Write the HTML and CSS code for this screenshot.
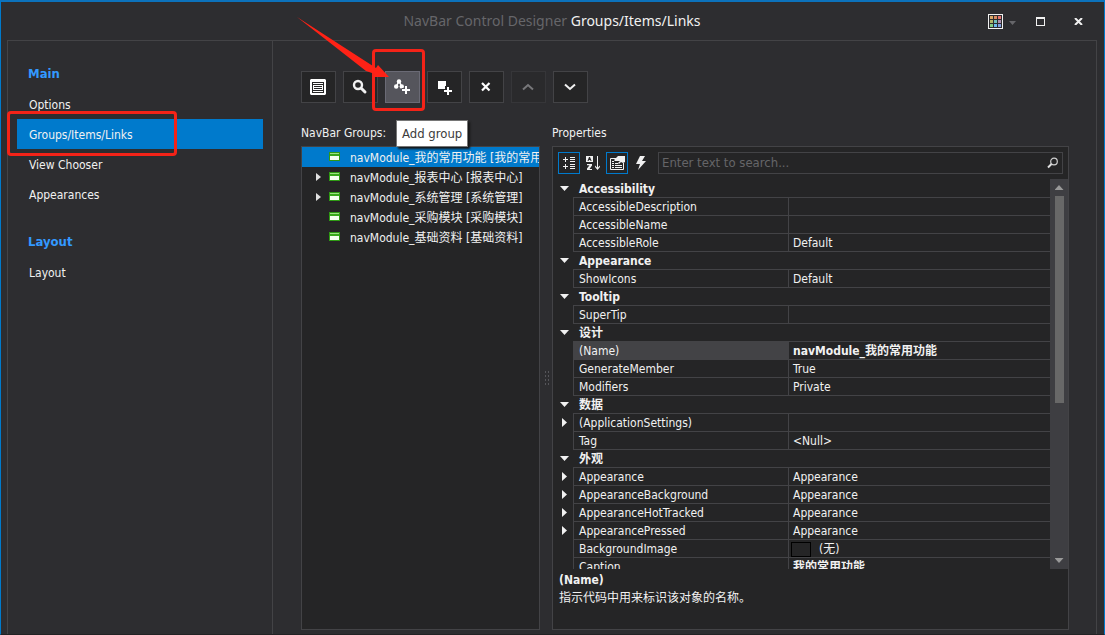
FILE: index.html
```html
<!DOCTYPE html>
<html lang="zh-CN">
<head>
<meta charset="utf-8">
<title>NavBar Control Designer</title>
<link rel="stylesheet" href="styles.css">
</head>
<body>
<div class="window">
  <header class="titlebar">
    <h1 class="title"><span class="title-app">NavBar Control Designer</span> Groups/Items/Links</h1>
    <div class="window-buttons">
      <button class="win-btn win-skin" aria-label="Skin">
        <svg width="28" height="15" viewBox="0 0 28 15">
          <rect x=".5" y=".5" width="14" height="14" fill="#2d2d30" stroke="#f1f1f1"/>
          <path fill="#d8a868" d="M2 2h3v3H2z"/><path fill="#dc8c60" d="M6 2h3v3H6z"/><path fill="#e87470" d="M10 2h3v3h-3z"/>
          <path fill="#b4b468" d="M2 6h3v3H2z"/><path fill="#70c0b8" d="M6 6h3v3H6z"/><path fill="#b090b0" d="M10 6h3v3h-3z"/>
          <path fill="#84cc84" d="M2 10h3v3H2z"/><path fill="#6cb8f0" d="M6 10h3v3H6z"/><path fill="#84a0e0" d="M10 10h3v3h-3z"/>
          <path fill="#66666a" d="M21 7h7l-3.500 4z"/>
        </svg>
      </button>
      <button class="win-btn" aria-label="Maximize">
        <svg width="9" height="9" viewBox="0 0 9 9"><path fill="#f1f1f1" fill-rule="evenodd" d="M0 0h9v9H0zM1 2v6h7V2z"/></svg>
      </button>
      <button class="win-btn" aria-label="Close">
        <svg width="9" height="7" viewBox="0 0 9 7"><path stroke="#f1f1f1" stroke-width="2" d="M1 0l7 7M8 0L1 7"/></svg>
      </button>
    </div>
  </header>

  <div class="frame">
    <nav class="sidebar">
      <h2 class="nav-title">Main</h2>
      <a class="nav-item" href="#options">Options</a>
      <a class="nav-item nav-active" href="#groups">Groups/Items/Links<span class="mark mark-nav"></span></a>
      <a class="nav-item" href="#view">View Chooser</a>
      <a class="nav-item" href="#appearances">Appearances</a>
      <h2 class="nav-title">Layout</h2>
      <a class="nav-item" href="#layout">Layout</a>
    </nav>

    <main class="content">
      <div class="toolbar">
        <button class="tool" aria-label="Show list">
          <svg width="16" height="16" viewBox="0 0 16 16"><path fill="#fff" fill-rule="evenodd" d="M1 0h14l1 1v14l-1 1H1l-1-1V1zM2 3v11h12V3z"/><path fill="#fff" fill-rule="evenodd" d="M3 4h10v1H3zM3 12h10v1H3zM3 6h10v5H3zM4 7v1h8V7zM4 9v1h8V9z"/></svg>
        </button>
        <button class="tool" aria-label="Search">
          <svg width="16" height="16" viewBox="0 0 16 16"><circle cx="6" cy="6" r="4" fill="none" stroke="#f1f1f1" stroke-width="2.400"/><path stroke="#f1f1f1" stroke-width="3" stroke-linecap="round" d="M9.500 9.500l3.500 3.500"/></svg>
        </button>
        <div class="tool-slot">
          <button class="tool tool-hot" aria-label="Add group" aria-describedby="tip">
            <svg width="16" height="16" viewBox="0 0 16 16"><path fill="none" stroke="#fff" stroke-width="1.500" d="M5 2L2 8M5 2l3 6"/><circle cx="5" cy="2.500" r="2.200" fill="#fff"/><circle cx="2.200" cy="7.500" r="2.200" fill="#fff"/><circle cx="7.800" cy="7.500" r="2.200" fill="#fff"/><path stroke="#55555c" stroke-width="4" d="M12 6v10M7.500 11H16"/><path fill="#fff" d="M11 7h2v3h3v2h-3v3h-2v-3H8v-2h3z"/></svg>
          </button>
          <span class="mark mark-tool"></span>
          <svg class="arrow" width="92" height="62" viewBox="0 0 92 62"><path fill="#ff2216" d="M0 0L79 51 81 48 92 60 76 60 78 57 69 54z"/></svg>
          <span class="tooltip" id="tip" role="tooltip">Add group</span>
        </div>
        <button class="tool" aria-label="Add item">
          <svg width="16" height="16" viewBox="0 0 16 16"><path fill="#fff" d="M2 2h8v5H9v3H2z"/><path fill="#fff" d="M11 8h2v3h3v2h-3v3h-2v-3H8v-2h3z"/></svg>
        </button>
        <button class="tool" aria-label="Remove">
          <svg width="16" height="16" viewBox="0 0 16 16"><path stroke="#fff" stroke-width="2.200" d="M4 4l7.500 7.500M11.500 4L4 11.500"/></svg>
        </button>
        <button class="tool tool-off" aria-label="Move up" disabled>
          <svg width="16" height="16" viewBox="0 0 16 16"><path fill="none" stroke="#77777a" stroke-width="2" d="M3 10.500l5-4.500 5 4.500"/></svg>
        </button>
        <button class="tool" aria-label="Move down">
          <svg width="16" height="16" viewBox="0 0 16 16"><path fill="none" stroke="#f1f1f1" stroke-width="2" d="M3 5.500L8 10l5-4.500"/></svg>
        </button>
      </div>

      <div class="panes">
        <section class="groups">
          <h3 class="pane-title">NavBar Groups:</h3>
          <ul class="tree">
            <li class="node node-on"><i class="twist"></i><i class="group-icon"></i>navModule_我的常用功能 [我的常用功能]</li>
            <li class="node"><i class="twist twist-right"></i><i class="group-icon"></i>navModule_报表中心 [报表中心]</li>
            <li class="node"><i class="twist twist-right"></i><i class="group-icon"></i>navModule_系统管理 [系统管理]</li>
            <li class="node"><i class="twist"></i><i class="group-icon"></i>navModule_采购模块 [采购模块]</li>
            <li class="node"><i class="twist"></i><i class="group-icon"></i>navModule_基础资料 [基础资料]</li>
          </ul>
        </section>

        <div class="splitter"><i class="grip"></i></div>

        <section class="props">
          <h3 class="pane-title">Properties</h3>
          <div class="prop-panel">
            <div class="prop-bar">
              <button class="mini mini-on" aria-label="Categorized">
                <svg width="16" height="16" viewBox="0 0 16 16"><path fill="#f1f1f1" d="M4 2h1v2h2v1H5v2H4V5H2V4h2zM4 9h1v2h2v1H5v2H4v-2H2v-1h2zM9 2h5v1H9zM9 4h5v1H9zM9 6h5v1H9zM9 9h5v1H9zM9 11h5v1H9zM9 13h5v1H9z"/></svg>
              </button>
              <button class="mini" aria-label="Alphabetical">
                <svg width="16" height="16" viewBox="0 0 16 16"><path fill="#f1f1f1" fill-rule="evenodd" d="M1 1h7v6H1zM4 2L2.500 6h1l.4-1h1.300l.4 1h1L5 2z"/><path fill="#f1f1f1" d="M2 9h5v1.500L4.500 14H7v1H2v-1.500L4.500 10.200H2zM12 1h1v11.500l2-2v1.500l-2.500 3L10 12v-1.500l2 2z"/></svg>
              </button>
              <button class="mini mini-on" aria-label="Property pages">
                <svg width="16" height="16" viewBox="0 0 16 16"><path fill="none" stroke="#f1f1f1" d="M7 3.500H1.500v11h13V8"/><path fill="#f1f1f1" d="M3 6h2v1H3zM3 8h2v1H3zM3 10h2v1H3zM3 12h2v1H3zM6 8h3v1H6zM6 10h7v1H6zM6 12h7v1H6zM9 1h7v6l-2 1-2-1-2 2-1-1 2-2H6L5 5z"/></svg>
              </button>
              <button class="mini" aria-label="Events">
                <svg width="16" height="16" viewBox="0 0 16 16"><path fill="#f1f1f1" d="M7 1h5L9 6h4L5 15l2-6H3z"/></svg>
              </button>
              <label class="search">
                <input class="search-input" type="text" placeholder="Enter text to search..." aria-label="Search properties">
                <svg width="12" height="12" viewBox="0 0 12 12"><circle cx="7" cy="4.500" r="3.300" fill="none" stroke="#d0d0d0" stroke-width="1.200"/><path stroke="#e0e0e0" stroke-width="2" d="M4.500 7L1 10.500"/></svg>
              </label>
            </div>
            <div class="grid-area">
              <div class="grid-clip">
                <table class="grid">
                  <colgroup><col class="col-twist"><col class="col-name"><col></colgroup>
                  <tbody>
                    <tr class="cat"><td class="tw"><i class="down"></i></td><th colspan="2">Accessibility</th></tr>
                    <tr><td class="tw"></td><td>AccessibleDescription</td><td></td></tr>
                    <tr><td class="tw"></td><td>AccessibleName</td><td></td></tr>
                    <tr><td class="tw"></td><td>AccessibleRole</td><td>Default</td></tr>
                    <tr class="cat"><td class="tw"><i class="down"></i></td><th colspan="2">Appearance</th></tr>
                    <tr><td class="tw"></td><td>ShowIcons</td><td>Default</td></tr>
                    <tr class="cat"><td class="tw"><i class="down"></i></td><th colspan="2">Tooltip</th></tr>
                    <tr><td class="tw"></td><td>SuperTip</td><td></td></tr>
                    <tr class="cat"><td class="tw"><i class="down"></i></td><th colspan="2">设计</th></tr>
                    <tr><td class="tw"></td><td class="picked">(Name)</td><td class="strong">navModule_我的常用功能</td></tr>
                    <tr><td class="tw"></td><td>GenerateMember</td><td>True</td></tr>
                    <tr><td class="tw"></td><td>Modifiers</td><td>Private</td></tr>
                    <tr class="cat"><td class="tw"><i class="down"></i></td><th colspan="2">数据</th></tr>
                    <tr><td class="tw"><i class="right"></i></td><td>(ApplicationSettings)</td><td></td></tr>
                    <tr><td class="tw"></td><td>Tag</td><td>&lt;Null&gt;</td></tr>
                    <tr class="cat"><td class="tw"><i class="down"></i></td><th colspan="2">外观</th></tr>
                    <tr><td class="tw"><i class="right"></i></td><td>Appearance</td><td>Appearance</td></tr>
                    <tr><td class="tw"><i class="right"></i></td><td>AppearanceBackground</td><td>Appearance</td></tr>
                    <tr><td class="tw"><i class="right"></i></td><td>AppearanceHotTracked</td><td>Appearance</td></tr>
                    <tr><td class="tw"><i class="right"></i></td><td>AppearancePressed</td><td>Appearance</td></tr>
                    <tr><td class="tw"></td><td>BackgroundImage</td><td class="image-cell"><span class="image-value"><i class="swatch"></i>(无)</span></td></tr>
                    <tr><td class="tw"></td><td>Caption</td><td class="strong">我的常用功能</td></tr>
                  </tbody>
                </table>
              </div>
              <div class="scroll"><i class="scroll-up"></i><i class="thumb"></i><i class="scroll-down"></i></div>
            </div>
            <div class="hint">
              <strong class="hint-name">(Name)</strong>
              <p class="hint-text">指示代码中用来标识该对象的名称。</p>
            </div>
          </div>
        </section>
      </div>
    </main>
  </div>
</div>
</body>
</html>
```

FILE: styles.css
```css
* {
  box-sizing: border-box;
}

body {
  margin: 0;
  background: #2d2d30;
  color: #f1f1f1;
  font: 12px/18px "DejaVu Sans Condensed", "Noto Sans CJK SC", sans-serif;
}

button,
input {
  font: inherit;
  color: inherit;
  padding: 0;
}

h1, h2, h3, p, ul {
  margin: 0;
  padding: 0;
}

svg {
  display: block;
}

.window {
  display: flex;
  flex-direction: column;
  height: 100vh;
  padding: 0 7px 0 6px;
  border: 1px solid #007acc;
  border-bottom-color: #222224;
  border-top: 2px solid #0c72bc;
}

/* Title bar */
.titlebar {
  display: grid;
  grid-template-columns: 1fr auto 1fr;
  align-items: center;
  height: 38px;
}

.title {
  grid-column: 2;
  font-family: "Noto Sans", sans-serif;
  font-size: 14px;
  font-weight: 400;
}

.title-app {
  color: #66666a;
}

.window-buttons {
  display: flex;
  justify-content: flex-end;
  align-items: center;
  gap: 20px;
  padding-right: 14px;
}

.win-btn {
  border: 0;
  background: none;
}

.window-buttons .win-btn + .win-btn + .win-btn {
  margin-left: 9px;
}

/* Frame */
.frame {
  display: flex;
  flex: 1;
  min-height: 0;
  border: 1px solid #434346;
  border-bottom: 0;
}

.sidebar {
  flex: 0 0 265px;
  padding: 17px 9px 0;
  border-right: 1px solid #434346;
}

.nav-title {
  padding-left: 11px;
  color: #3399ff;
  font-size: 13px;
  line-height: 31px;
  font-weight: 700;
}

.nav-item + .nav-title {
  margin-top: 17px;
}

.nav-item {
  position: relative;
  display: block;
  padding: 2px 0 0 12px;
  line-height: 28px;
  color: #f1f1f1;
  text-decoration: none;
}

.nav-active {
  background: #007acc;
}

.mark {
  position: absolute;
  border: 3px solid #f42318;
  border-radius: 4px;
  z-index: 2;
}

.mark-nav {
  left: -10px;
  top: -8px;
  width: 170px;
  height: 45px;
}

/* Content */
.content {
  display: flex;
  flex-direction: column;
  flex: 1;
  min-width: 0;
  padding: 30px 27px 4px 28px;
}

.toolbar {
  display: flex;
  gap: 7px;
}

.tool {
  display: grid;
  place-items: center;
  width: 35px;
  height: 32px;
  padding-right: 1px;
  border: 1px solid #434346;
  background: #252526;
}

.tool-slot {
  position: relative;
}

.tool-hot {
  border-color: #6a6a75;
  background: #55555c;
}

.tool-off {
  border-color: #363639;
  background: #2a2a2c;
}

.mark-tool {
  left: -13px;
  top: -22px;
  width: 53px;
  height: 62px;
}

.arrow {
  position: absolute;
  left: -88px;
  top: -54px;
  z-index: 2;
}

.tooltip {
  position: absolute;
  left: 11px;
  top: 49px;
  padding: 1px 5px 0;
  border: 1px solid #767676;
  background: #fff;
  box-shadow: 2px 2px 2px #161616;
  color: #3c3c3c;
  font-size: 13px;
  line-height: 24px;
  white-space: nowrap;
  z-index: 2;
}

.panes {
  display: flex;
  flex: 1;
  min-height: 0;
  padding-top: 21px;
}

.pane-title {
  height: 22px;
  font-size: 12px;
  line-height: 18px;
  font-weight: 400;
}

.groups {
  display: flex;
  flex-direction: column;
  flex: 0 0 239px;
  min-width: 0;
}

.tree {
  flex: 1;
  border: 1px solid #434346;
  background: #252526;
  list-style: none;
  overflow: hidden;
}

.node {
  display: flex;
  align-items: center;
  height: 20px;
  padding-top: 2px;
  white-space: nowrap;
}

.node-on {
  background: #007acc;
}

.twist {
  flex: 0 0 5px;
  height: 8px;
  margin: 0 8px 2px 14px;
}

.twist-right {
  background: #e0e0e0;
  clip-path: polygon(0 0, 100% 50%, 0 100%);
}

.group-icon {
  flex: 0 0 11px;
  height: 9px;
  margin: 0 10px 4px 0;
  border: 1px solid #2f9a14;
  background: linear-gradient(#9be080 1px, #38a81c 1px, #38a81c 3px, #f4fff0 3px);
}

.splitter {
  display: grid;
  place-items: center;
  flex: 0 0 12px;
  padding-top: 3px;
}

.grip {
  width: 5px;
  height: 17px;
  background: radial-gradient(#55555a 1px, transparent 1px) 0 0 / 3px 4px;
}

/* Property grid */
.props {
  display: flex;
  flex-direction: column;
  flex: 1;
  min-width: 0;
}

.prop-panel {
  display: flex;
  flex-direction: column;
  flex: 1;
  min-height: 0;
  border: 1px solid #434346;
  background: #252526;
}

.prop-bar {
  display: flex;
  gap: 2px;
  padding: 5px;
  height: 32px;
}

.mini {
  display: grid;
  place-items: center;
  width: 22px;
  height: 22px;
  border: 1px solid transparent;
  background: none;
}

.mini-on {
  border-color: #007acc;
}

.search {
  display: flex;
  align-items: center;
  flex: 1;
  min-width: 0;
  margin-left: 4px;
  padding: 0 3px;
  border: 1px solid #434346;
}

.search-input {
  flex: 1;
  min-width: 0;
  border: 0;
  background: none;
  outline: 0;
  font-size: 13px;
}

.search-input::placeholder {
  color: #656568;
  opacity: 1;
}

.grid-area {
  display: flex;
  flex: 1;
  min-height: 0;
}

.grid-clip {
  flex: 1;
  min-width: 0;
  overflow: hidden;
}

.grid {
  width: 100%;
  table-layout: fixed;
  border-collapse: separate;
  border-spacing: 0;
}

.col-twist {
  width: 20px;
}

.col-name {
  width: 215px;
}

.grid td,
.grid th {
  height: 18px;
  padding: 2px 0 0 5px;
  border-top: 1px solid #434346;
  border-left: 1px solid #434346;
  line-height: 15px;
  text-align: left;
  white-space: nowrap;
}

.grid th {
  padding-left: 6px;
  border-left: 0;
  font-weight: 700;
}

.grid tr:first-child th {
  border-top-color: transparent;
}

.grid .tw {
  padding: 0 0 0 7px;
  border-color: transparent;
}

.grid .picked {
  background: #434346;
}

.grid td:last-child {
  padding-left: 4px;
}

.strong {
  font-weight: 700;
}

.down {
  display: block;
  width: 9px;
  height: 5px;
  margin-left: -1px;
  background: #f1f1f1;
  clip-path: polygon(0 0, 100% 0, 50% 100%);
}

.right {
  display: block;
  width: 5px;
  height: 9px;
  margin-left: 1px;
  background: #f1f1f1;
  clip-path: polygon(0 0, 100% 50%, 0 100%);
}

.grid td.image-cell {
  padding-left: 2px;
}

.image-value {
  display: flex;
  gap: 8px;
}

.swatch {
  width: 20px;
  height: 15px;
  border: 1px solid #000;
}

.scroll {
  display: flex;
  flex-direction: column;
  align-items: center;
  flex: 0 0 18px;
  background: #3e3e42;
}

.scroll-up,
.scroll-down {
  width: 9px;
  height: 5px;
  margin: 6px 0;
  background: #999;
}

.scroll-up {
  clip-path: polygon(50% 0, 100% 100%, 0 100%);
}

.scroll-down {
  margin-top: auto;
  clip-path: polygon(0 0, 100% 0, 50% 100%);
}

.thumb {
  width: 9px;
  height: 53%;
  background: #686868;
}

.hint {
  flex: 0 0 60px;
  padding: 2px 6px;
}

.hint-name {
  display: block;
}
```
